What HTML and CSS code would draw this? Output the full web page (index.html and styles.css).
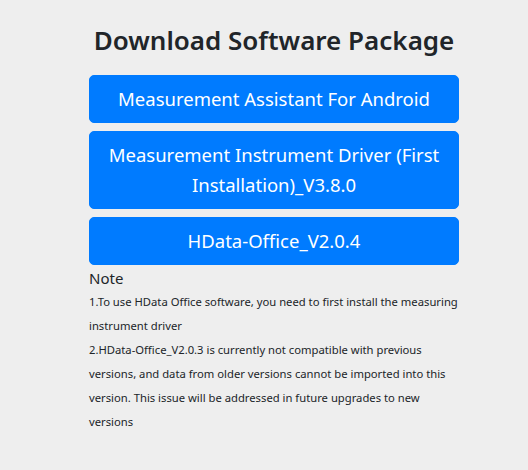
FILE: index.html
```html
<!DOCTYPE html>
<html lang="en">

<head>
  <meta charset="UTF-8" />
  <meta name="viewport" content="width=device-width, initial-scale=1.0"/>
  <title>Download Software Package</title>
  <link rel="stylesheet" href="styles.css">
</head>
<body>
  <div class="container">
    <h3 class="title">Download Software Package</h3>
    <div class="downloads">
      <a class="btn" href="#">Measurement Assistant For Android</a>
      <a class="btn" href="#">Measurement Instrument Driver (First Installation)_V3.8.0</a>
      <a class="btn" href="#">HData-Office_V2.0.4</a>
    </div>
    <div class="note">
      <div class="note-title">Note</div>
      <p>1.To use HData Office software, you need to first install the measuring instrument driver</p>
      <p>2.HData-Office_V2.0.3 is currently not compatible with previous versions, and data from older versions cannot be imported into this version. This issue will be addressed in future upgrades to new versions</p>
    </div>
  </div>
</body>

</html>
```

FILE: styles.css
```css
body {
  margin: 0;
  background: #eeeeee;
  color: #212529;
  font-family: 'Noto Sans', sans-serif;
}
.container {
  width: 370px;
  margin-left: 89px;
  padding-top: 22px;
}
.title {
  margin: 0 0 17px 0;
  text-align: center;
  font-size: 26px;
  font-weight: 600;
  line-height: 36px;
}
.downloads {
  display: flex;
  flex-direction: column;
  gap: 8px;
}
.btn {
  display: block;
  padding: 8px 16px;
  background: #007bff;
  border: 1px solid #007bff;
  border-radius: 5px;
  color: white;
  font-size: 18.5px;
  line-height: 30px;
  text-align: center;
  text-decoration: none;
}
.note {
  margin-top: 1px;
}
.note-title {
  font-size: 15px;
  line-height: 24px;
}
.note p {
  margin: 0;
  font-size: 11.25px;
  line-height: 24px;
}
```
